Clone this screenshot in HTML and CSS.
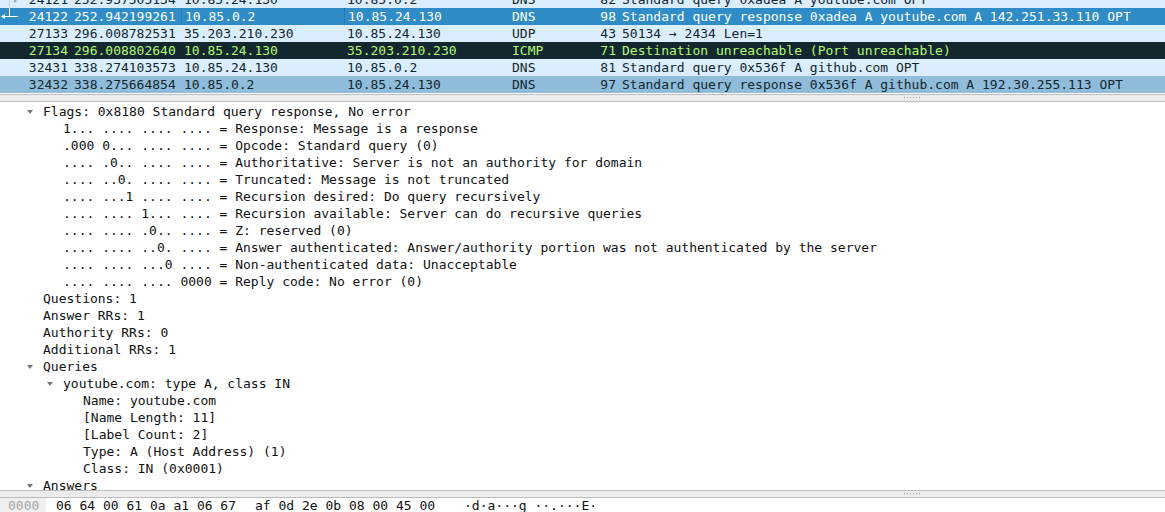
FILE: index.html
```html
<!DOCTYPE html>
<html>
<head>
<meta charset="utf-8">
<link rel="stylesheet" href="styles.css">
</head>
<body>
<div class="app">
  <div class="packets">
    <div class="rows">
      <div class="row udp"><span class="c no">24121</span><span class="c time">252.937505134</span><span class="c src">10.85.24.130</span><span class="c dst">10.85.0.2</span><span class="c proto">DNS</span><span class="c len">82</span><span class="c info">Standard query 0xadea A youtube.com OPT</span></div>
      <div class="row sel"><span class="c no">24122</span><span class="c time">252.942199261</span><span class="c src">10.85.0.2</span><span class="c dst">10.85.24.130</span><span class="c proto">DNS</span><span class="c len">98</span><span class="c info">Standard query response 0xadea A youtube.com A 142.251.33.110 OPT</span></div>
      <div class="row udp"><span class="c no">27133</span><span class="c time">296.008782531</span><span class="c src">35.203.210.230</span><span class="c dst">10.85.24.130</span><span class="c proto">UDP</span><span class="c len">43</span><span class="c info">50134 → 2434 Len=1</span></div>
      <div class="row icmp"><span class="c no">27134</span><span class="c time">296.008802640</span><span class="c src">10.85.24.130</span><span class="c dst">35.203.210.230</span><span class="c proto">ICMP</span><span class="c len">71</span><span class="c info">Destination unreachable (Port unreachable)</span></div>
      <div class="row udp"><span class="c no">32431</span><span class="c time">338.274103573</span><span class="c src">10.85.24.130</span><span class="c dst">10.85.0.2</span><span class="c proto">DNS</span><span class="c len">81</span><span class="c info">Standard query 0x536f A github.com OPT</span></div>
      <div class="row hover"><span class="c no">32432</span><span class="c time">338.275664854</span><span class="c src">10.85.0.2</span><span class="c dst">10.85.24.130</span><span class="c proto">DNS</span><span class="c len">97</span><span class="c info">Standard query response 0x536f A github.com A 192.30.255.113 OPT</span></div>
    </div>
    <svg class="related" width="22" height="26" viewBox="0 0 22 26">
      <polygon points="14,-1 17,1 14,3" fill="#9aa7b0"/>
      <line x1="9.5" y1="0" x2="9.5" y2="8" stroke="#c9d3da" stroke-width="1"/>
      <line x1="9.5" y1="8" x2="9.5" y2="16.5" stroke="#ffffff" stroke-width="1"/>
      <line x1="4" y1="16.5" x2="18" y2="16.5" stroke="#ffffff" stroke-width="1"/>
      <polygon points="1,16.5 5,14 5,19" fill="#ffffff"/>
    </svg>
  </div>

  <div class="splitter"><span class="grip"></span></div>

  <div class="details">
    <div class="d l1 open"><span class="tog"></span>Flags: 0x8180 Standard query response, No error</div>
    <div class="d l2">1... .... .... .... = Response: Message is a response</div>
    <div class="d l2">.000 0... .... .... = Opcode: Standard query (0)</div>
    <div class="d l2">.... .0.. .... .... = Authoritative: Server is not an authority for domain</div>
    <div class="d l2">.... ..0. .... .... = Truncated: Message is not truncated</div>
    <div class="d l2">.... ...1 .... .... = Recursion desired: Do query recursively</div>
    <div class="d l2">.... .... 1... .... = Recursion available: Server can do recursive queries</div>
    <div class="d l2">.... .... .0.. .... = Z: reserved (0)</div>
    <div class="d l2">.... .... ..0. .... = Answer authenticated: Answer/authority portion was not authenticated by the server</div>
    <div class="d l2">.... .... ...0 .... = Non-authenticated data: Unacceptable</div>
    <div class="d l2">.... .... .... 0000 = Reply code: No error (0)</div>
    <div class="d l1">Questions: 1</div>
    <div class="d l1">Answer RRs: 1</div>
    <div class="d l1">Authority RRs: 0</div>
    <div class="d l1">Additional RRs: 1</div>
    <div class="d l1 open"><span class="tog"></span>Queries</div>
    <div class="d l2 open"><span class="tog"></span>youtube.com: type A, class IN</div>
    <div class="d l3">Name: youtube.com</div>
    <div class="d l3">[Name Length: 11]</div>
    <div class="d l3">[Label Count: 2]</div>
    <div class="d l3">Type: A (Host Address) (1)</div>
    <div class="d l3">Class: IN (0x0001)</div>
    <div class="d l1 open"><span class="tog"></span>Answers</div>
  </div>

  <div class="splitter"><span class="grip"></span></div>

  <div class="bytes">
    <span class="off">0000</span>
    <span class="hex g1">06 64 00 61 0a a1 06 67</span>
    <span class="hex g2">af 0d 2e 0b 08 00 45 00</span>
    <span class="ascii">·d·a···g ··.···E·</span>
  </div>
</div>
</body>
</html>
```

FILE: styles.css
```css
html, body {
  margin: 0;
  padding: 0;
  background: #ffffff;
}
.app {
  width: 1165px;
  height: 512px;
  overflow: hidden;
  font-family: "DejaVu Sans Mono", "Liberation Mono", monospace;
  font-size: 13px;
  color: #111111;
  display: flex;
  flex-direction: column;
}
.packets {
  position: relative;
  height: 94px;
  overflow: hidden;
  flex: none;
  background: #ffffff;
}
.rows {
  margin-top: -9px;
}
.row {
  display: flex;
  height: 17px;
  line-height: 17px;
  white-space: pre;
}
.row.udp { background: #daeeff; color: #12272e; }
.row.sel { background: #308cc6; color: #ffffff; }
.row.icmp { background: #12272e; color: #b7f774; }
.row.hover { background: #8fbcdb; color: #12272e; }
.c {
  flex: none;
  box-sizing: border-box;
  overflow: hidden;
}
.no { width: 71px; text-align: right; padding-right: 3px; }
.time { width: 110px; padding-left: 3px; }
.src { width: 163px; padding-left: 3px; }
.dst { width: 165px; padding-left: 3px; }
.proto { width: 86px; padding-left: 3px; }
.len { width: 24px; text-align: right; padding-right: 3px; }
.info { flex: 1; padding-left: 3px; }
.row.sel .src, .row.sel .dst {
  border-left: 1px solid #2a79ad;
}
.related {
  position: absolute;
  left: 0;
  top: 0;
}
.splitter {
  flex: none;
  height: 6px;
  border-top: 1px solid #bdbdbd;
  border-bottom: 1px solid #bdbdbd;
  background: #ececec;
  position: relative;
}
.grip {
  position: absolute;
  left: 904px;
  top: 2px;
  width: 17px;
  height: 1px;
  background-image: repeating-linear-gradient(to right, #a8a8a8 0, #a8a8a8 1px, transparent 1px, transparent 3px);
}
.details {
  flex: none;
  height: 387px;
  padding-top: 1px;
  overflow: hidden;
  background: #ffffff;
}
.d {
  height: 17px;
  line-height: 17px;
  white-space: pre;
  color: #111111;
}
.l1 { padding-left: 43px; }
.l2 { padding-left: 63px; }
.l3 { padding-left: 83px; }
.l1.open { padding-left: 23px; }
.l2.open { padding-left: 43px; }
.tog {
  display: inline-block;
  width: 20px;
  height: 17px;
  vertical-align: top;
  position: relative;
}
.tog::before {
  content: "";
  position: absolute;
  left: 4px;
  top: 7px;
  width: 0;
  height: 0;
  border-left: 3px solid transparent;
  border-right: 3px solid transparent;
  border-top: 4px solid #777777;
}
.bytes {
  flex: 1;
  display: flex;
  height: 16px;
  line-height: 16px;
  white-space: pre;
  color: #111111;
}
.off {
  width: 46px;
  box-sizing: border-box;
  padding-left: 8px;
  background: #efefef;
  color: #a6a6a6;
}
.g1 { margin-left: 10px; }
.g2 { margin-left: 19px; }
.ascii { margin-left: 29px; }
```
